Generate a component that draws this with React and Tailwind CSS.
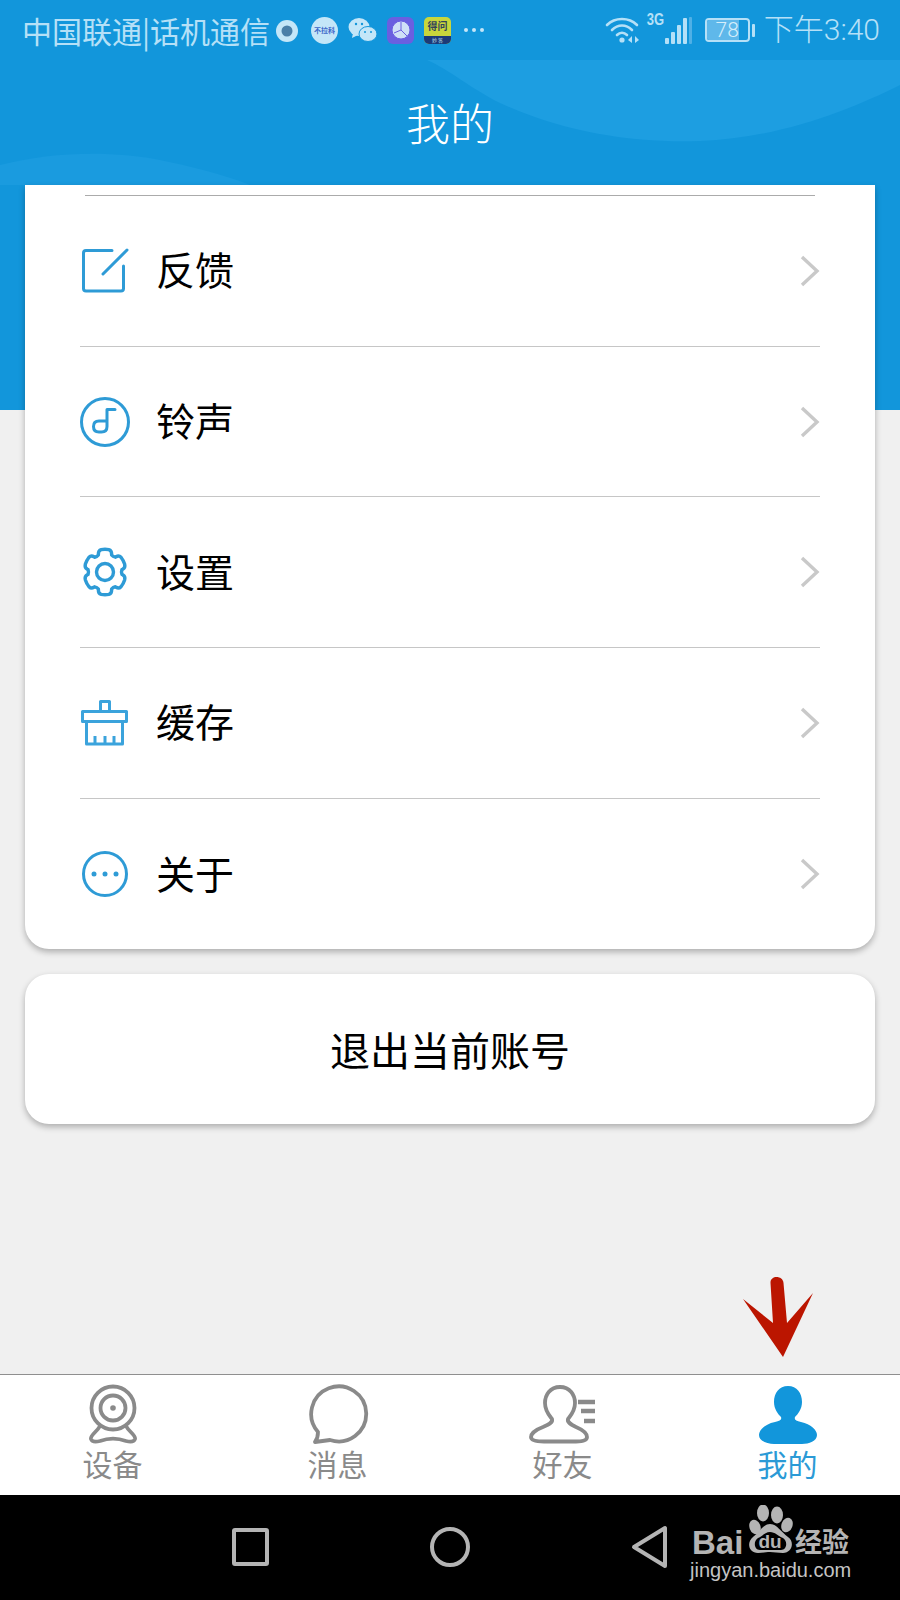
import React from "react"

const cjk = "font-['Noto_Sans_CJK_SC','Noto_Sans',sans-serif]"

// 6 tooth gear outline, starts from the top tooth
const gearPath = () => {
    const pts = []
    for (let i = 0; i < 6; i++) {
        const a = (i * 60 - 90) * Math.PI / 180
        const at = (r, d) => {
            const x = 25 + r * Math.cos(a + d) * 0.92
            const y = 25 + r * Math.sin(a + d)
            return x.toFixed(1) + " " + y.toFixed(1)
        }
        pts.push((i === 0 ? "M" : "L") + at(18.5, -0.4))
        pts.push("C" + at(20, -0.36) + " " + at(22.8, -0.36) + " " + at(22.8, -0.18))
        pts.push("Q" + at(23.2, 0) + " " + at(22.8, 0.18))
        pts.push("C" + at(22.8, 0.36) + " " + at(20, 0.36) + " " + at(18.5, 0.4))
        pts.push("Q" + at(17.5, 0.52) + " " + at(18.5, 1.047 - 0.4))
    }
    return pts.join(" ") + " Z"
}

const FeedbackIcon = () => (
    <svg width="50" height="48" viewBox="0 0 50 48" fill="none" stroke="#2e9bd6" strokeWidth="3" strokeLinecap="round" strokeLinejoin="round">
        <path d="M32 3.5 H6 Q3.5 3.5 3.5 6 V41.5 Q3.5 44 6 44 H41 Q43.5 44 43.5 41.5 V19" />
        <path d="M23 27 L47 3" />
    </svg>
)

const MusicIcon = () => (
    <svg width="50" height="50" viewBox="0 0 50 50" fill="none" stroke="#2e9bd6" strokeWidth="3" strokeLinecap="round" strokeLinejoin="round">
        <circle cx="25" cy="25" r="23.5" />
        <path d="M35 12.5 H27 V29.5 Q27 35 21.5 35 H19 Q13.5 35 13.5 29.5 Q13.5 24 19 24 H27" />
    </svg>
)

const GearIcon = () => (
    <svg width="50" height="50" viewBox="0 0 50 50" fill="none" stroke="#2e9bd6" strokeWidth="3.4" strokeLinejoin="round">
        <path d={gearPath()} />
        <circle cx="25" cy="25" r="8.5" />
    </svg>
)

const BroomIcon = () => (
    <svg width="50" height="48" viewBox="0 0 50 48" fill="none" stroke="#3ba3dc" strokeWidth="3" strokeLinejoin="round">
        <path d="M20.5 12.5 V2.5 H29.5 V12.5" />
        <rect x="2.5" y="12.5" width="44" height="10" />
        <path d="M6.5 22.5 V45 H42.5 V22.5" />
        <path d="M15 45 V37 M25 45 V37 M34 45 V37" />
    </svg>
)

const MoreIcon = () => (
    <svg width="50" height="50" viewBox="0 0 50 50" fill="none" stroke="#2e9bd6" strokeWidth="3">
        <circle cx="25" cy="25" r="21.5" />
        <circle cx="14" cy="25" r="2.5" fill="#2e9bd6" stroke="none" />
        <circle cx="25" cy="25" r="2.5" fill="#2e9bd6" stroke="none" />
        <circle cx="36" cy="25" r="2.5" fill="#2e9bd6" stroke="none" />
    </svg>
)

const Chevron = () => (
    <svg width="20" height="32" viewBox="0 0 20 32" fill="none" stroke="#c9c9c9" strokeWidth="3.4" className="ml-auto">
        <path d="M2 2 L17 16 L2 30" />
    </svg>
)

const CameraTab = () => (
    <svg width="52" height="60" viewBox="0 0 52 60" fill="none" stroke="#8a8a8a" strokeWidth="3.8">
        <circle cx="26" cy="24" r="21.5" />
        <circle cx="26" cy="24" r="12.5" />
        <circle cx="26" cy="24" r="2.8" fill="#8a8a8a" stroke="none" />
        <path d="M13 42 C10 48 3 51 4 55 C5 58 9 58 13 57 C21 54 31 54 39 57 C43 58 47 58 48 55 C49 51 42 48 39 42" strokeLinejoin="round" />
    </svg>
)

const BubbleTab = () => (
    <svg width="64" height="60" viewBox="0 0 64 60" fill="none" stroke="#8a8a8a" strokeWidth="3.8" strokeLinejoin="round">
        <path d="M12 48 A27.5 27.5 0 1 1 24 56 L9 58 Q12 54 12 48 Z" />
    </svg>
)

const FriendTab = () => (
    <svg width="70" height="60" viewBox="0 0 70 60" fill="none" stroke="#8a8a8a" strokeWidth="3.8" strokeLinejoin="round">
        <path d="M32 3 C22 3 17 11 17 19 C17 27 21 31 24 35 C25 38 22 40 15 43 C7 46 3 50 3 53 C3 57 10 57.5 16 57.5 L48 57.5 C54 57.5 59 57 59 53 C59 49 55 46 48 43 C42 40 39 38 40 35 C43 31 47 27 47 19 C47 11 42 3 32 3 Z" />
        <path d="M50 18 H67 M53 27 H67 M56 37 H67" strokeWidth="4.4" />
    </svg>
)

const MeTab = () => (
    <svg width="60" height="60" viewBox="0 0 60 60" fill="#1296db">
        <path d="M30 2 C21 2 16 9 16 18 C16 25 20 30 23 33 C24 36 22 37 17 38 C7 40 1 46 1 51 C1 57 9 60 16 60 L44 60 C51 60 59 57 59 51 C59 46 53 40 43 38 C38 37 36 36 37 33 C40 30 44 25 44 18 C44 9 39 2 30 2 Z" />
    </svg>
)

const rows = [
    { label: "反馈", icon: <FeedbackIcon /> },
    { label: "铃声", icon: <MusicIcon /> },
    { label: "设置", icon: <GearIcon /> },
    { label: "缓存", icon: <BroomIcon /> },
    { label: "关于", icon: <MoreIcon /> },
]

const tabs = [
    { label: "设备", icon: <CameraTab /> },
    { label: "消息", icon: <BubbleTab /> },
    { label: "好友", icon: <FriendTab /> },
    { label: "我的", icon: <MeTab />, active: true },
]

const StatusLeft = () => (
    <div className="flex items-center">
        <span className="text-[30px] leading-none w-[250px] whitespace-nowrap">中国联通|话机通信</span>
        <svg width="24" height="24" viewBox="0 0 24 24" className="ml-[3px] mt-[1px]">
            <circle cx="12" cy="12" r="11" fill="#c4e6f8" />
            <circle cx="12" cy="12" r="5.5" fill="#4a7fa8" />
        </svg>
        <div className="ml-[12px] w-[27px] h-[27px] rounded-full bg-[#c4e6f8] flex items-center justify-center text-[7px] font-bold text-[#3a66c8] whitespace-nowrap overflow-hidden">不拉科</div>
        <svg width="30" height="28" viewBox="0 0 30 28" className="ml-[10px]" fill="#c4e6f8">
            <ellipse cx="11" cy="11" rx="10.5" ry="9" />
            <path d="M5 17 L4 22 L10 19 Z" />
            <ellipse cx="20" cy="18" rx="9" ry="7.5" fill="#c4e6f8" stroke="#1296db" strokeWidth="1" />
            <circle cx="8" cy="8" r="1.2" fill="#1296db" />
            <circle cx="14" cy="8" r="1.2" fill="#1296db" />
            <circle cx="17" cy="16" r="1" fill="#1296db" />
            <circle cx="23" cy="16" r="1" fill="#1296db" />
        </svg>
        <div className="ml-[9px] w-[27px] h-[27px] rounded-[6px] bg-[#6a5fe0] flex items-center justify-center">
            <svg width="20" height="20" viewBox="0 0 20 20" fill="#cfe0f7" stroke="#6a5fe0" strokeWidth="1">
                <circle cx="10" cy="10" r="9" />
                <path d="M10 2 V10 L3 13 M10 10 L16 16" fill="none" />
            </svg>
        </div>
        <div className="ml-[10px] w-[27px] h-[27px] rounded-[5px] overflow-hidden flex flex-col bg-[#c8d63c]">
            <div className="h-[19px] flex items-center justify-center text-[10px] leading-none font-bold text-[#33435a] whitespace-nowrap">得问</div>
            <div className="flex-1 bg-[#1c3a78] flex items-center justify-center text-[5px] leading-none text-[#c4e6f8]">妙 答</div>
        </div>
        <div className="ml-[13px] flex gap-[4px]">
            <span className="w-[4px] h-[4px] rounded-full bg-[#c4e6f8]" />
            <span className="w-[4px] h-[4px] rounded-full bg-[#c4e6f8]" />
            <span className="w-[4px] h-[4px] rounded-full bg-[#c4e6f8]" />
        </div>
    </div>
)

const StatusRight = () => (
    <div className="flex items-center">
        <svg width="36" height="28" viewBox="0 0 36 28" fill="none" stroke="#b5e0f7" strokeWidth="2.6" strokeLinecap="round">
            <path d="M2 9 C10 1 24 1 32 9" />
            <path d="M7 14 C13 8 21 8 27 14" />
            <path d="M12 19 C15 16 19 16 22 19" />
            <circle cx="17" cy="24" r="2.6" fill="#b5e0f7" stroke="none" />
            <path d="M27 20 V27 L23 24 Z M30 20 L34 24 L30 27 Z" fill="#b5e0f7" stroke="none" />
        </svg>
        <div className="relative ml-[6px] w-[45px] h-[28px]">
            <span className="absolute left-0 top-[-3px] text-[13px] font-bold leading-none font-['Liberation_Sans',sans-serif] scale-y-125">3G</span>
            <div className="absolute right-0 bottom-0 flex items-end gap-[2px]">
                <span className="w-[4px] h-[6px] bg-[#b5e0f7] rounded-[1px]" />
                <span className="w-[4px] h-[12px] bg-[#b5e0f7] rounded-[1px]" />
                <span className="w-[4px] h-[19px] bg-[#b5e0f7] rounded-[1px]" />
                <span className="w-[4px] h-[26px] bg-[#b5e0f7] rounded-[1px]" />
                <span className="w-[3px] h-[27px] bg-[#4fb0e6] rounded-[1px]" />
            </div>
        </div>
        <div className="ml-[13px] w-[45px] h-[24px] rounded-[4px] border-2 border-[#b5e0f7] relative overflow-hidden flex items-center justify-center">
            <div className="absolute left-0 top-0 bottom-0 w-[78%] bg-[#5fb8ea]" />
            <span className="relative text-[21px] leading-none font-['Roboto',sans-serif] font-light text-[#d5eefb]">78</span>
        </div>
        <span className="ml-[2px] w-[3px] h-[13px] bg-[#b5e0f7] rounded-[1px]" />
        <span className="ml-[9px] text-[30px] leading-none whitespace-nowrap font-['Roboto','Noto_Sans_CJK_SC',sans-serif] font-light">下午3:40</span>
    </div>
)

const App = () => {
    return (
        <div className={"relative w-[900px] h-[1600px] overflow-hidden bg-[#f0f0f0] flex flex-col " + cjk}>
            {/* blue backdrop with the soft waves */}
            <svg className="absolute left-0 top-0" width="900" height="410" viewBox="0 0 900 410">
                <rect width="900" height="410" fill="#1296db" />
                <path d="M427 60 C450 70 470 88 500 103 C570 135 640 143 700 141 C780 138 850 110 900 85 V60 Z" fill="#1d9ee1" />
                <path d="M0 165 C50 152 110 150 160 160 C190 166 225 175 250 185 H0 Z" fill="#1a9bdf" />
            </svg>

            <div className="relative h-[60px] shrink-0 pl-[22px] pr-[20px] flex items-center justify-between text-[#b5e0f7]">
                <StatusLeft />
                <StatusRight />
            </div>

            <div className="relative h-[125px] shrink-0 flex items-center justify-center text-white text-[44px] font-light pb-[2px]">
                我的
            </div>

            <div className="relative flex-1 px-[25px] flex flex-col gap-[25px]">
                <div className="bg-white rounded-b-[24px] shadow-[0_3px_6px_rgba(0,0,0,0.28)] px-[55px] h-[764px]">
                    <div className="h-[11px] mx-[5px] border-b border-[#ababab]" />
                    {rows.map((row, i) => (
                        <div key={row.label} className={"h-[150.7px] flex items-center text-black " + (i < 4 ? "border-b border-[#c6c6c6]" : "")}>
                            <div className="w-[50px] flex justify-center">{row.icon}</div>
                            <span className="ml-[26px] text-[39px] leading-none mb-[4px]">{row.label}</span>
                            <Chevron />
                        </div>
                    ))}
                </div>

                <div className="h-[150px] bg-white rounded-[24px] shadow-[0_3px_6px_rgba(0,0,0,0.28)] flex items-center justify-center text-black text-[40px]">
                    退出当前账号
                </div>

                {/* red annotation arrow */}
                <svg className="absolute left-[718px] top-[1087px]" width="100" height="90" viewBox="0 0 100 90">
                    <path d="M52.5 11 C52 3 65 3 65.5 11 L69 51 L95 21 L65 85 L25 27 L55 51 Z" fill="#bb1500" />
                </svg>
            </div>

            <div className="h-[121px] shrink-0 bg-white border-t border-[#8f8f8f] flex">
                {tabs.map(tab => (
                    <div key={tab.label} className="flex-1 flex flex-col items-center pt-[9px]">
                        <div className="h-[60px] flex items-end">{tab.icon}</div>
                        <span className={"text-[30px] leading-[33px] mt-[3px] " + (tab.active ? "text-[#2b9ad6]" : "text-[#8a8a8a]")}>{tab.label}</span>
                    </div>
                ))}
            </div>

            <div className="relative h-[105px] shrink-0 bg-black flex items-center text-[#b4b4b4]">
                <div className="ml-[232px] w-[37px] h-[38px] rounded-[3px] border-[4px] border-[#b4b4b4] mb-[1px]" />
                <div className="ml-[161px] w-[40px] h-[40px] rounded-full border-[4px] border-[#b4b4b4] mb-[1px]" />
                <svg width="38" height="44" viewBox="0 0 38 44" fill="none" stroke="#b4b4b4" strokeWidth="4" strokeLinejoin="round" className="ml-[161px] mb-[1px]">
                    <path d="M34 3 V41 L3 22 Z" />
                </svg>

                {/* watermark */}
                <div className="absolute left-[690px] top-[10px] w-[165px] h-[80px]">
                    <span className="absolute left-[2px] top-[23px] text-[33px] leading-[30px] font-bold font-['Liberation_Sans',sans-serif]">Bai</span>
                    <svg className="absolute left-[53px] top-[0px]" width="56" height="50" viewBox="0 0 56 50" fill="#b4b4b4">
                        <ellipse cx="12" cy="22" rx="5.5" ry="7.5" transform="rotate(-20 12 22)" />
                        <ellipse cx="20" cy="8" rx="6" ry="8.5" />
                        <ellipse cx="34" cy="10" rx="6" ry="8.5" />
                        <ellipse cx="44" cy="20" rx="5.5" ry="7.5" transform="rotate(20 44 20)" />
                        <path d="M27 19 C20 19 17 27 10 32 C3 38 6 48 15 48 C20 48 23 47 27 47 C31 47 35 48 40 48 C49 48 52 37 45 32 C38 27 34 19 27 19 Z" />
                        <path d="M27 27 C22 27 20 31 15 33 C10 36 11 45 17 45 H38 C44 45 45 36 40 33 C35 31 32 27 27 27 Z" fill="#000" />
                    </svg>
                    <span className="absolute left-[63px] top-[27px] w-[34px] text-center text-[19px] leading-none font-bold font-['Liberation_Sans',sans-serif]">du</span>
                    <span className="absolute left-[105px] top-[22px] text-[27px] leading-none font-bold whitespace-nowrap">经验</span>
                    <span className="absolute left-0 top-[55px] text-[20px] leading-none whitespace-nowrap text-[#c4c4c4] font-['Liberation_Sans',sans-serif]">jingyan.baidu.com</span>
                </div>
            </div>
        </div>
    )
}

export default App
